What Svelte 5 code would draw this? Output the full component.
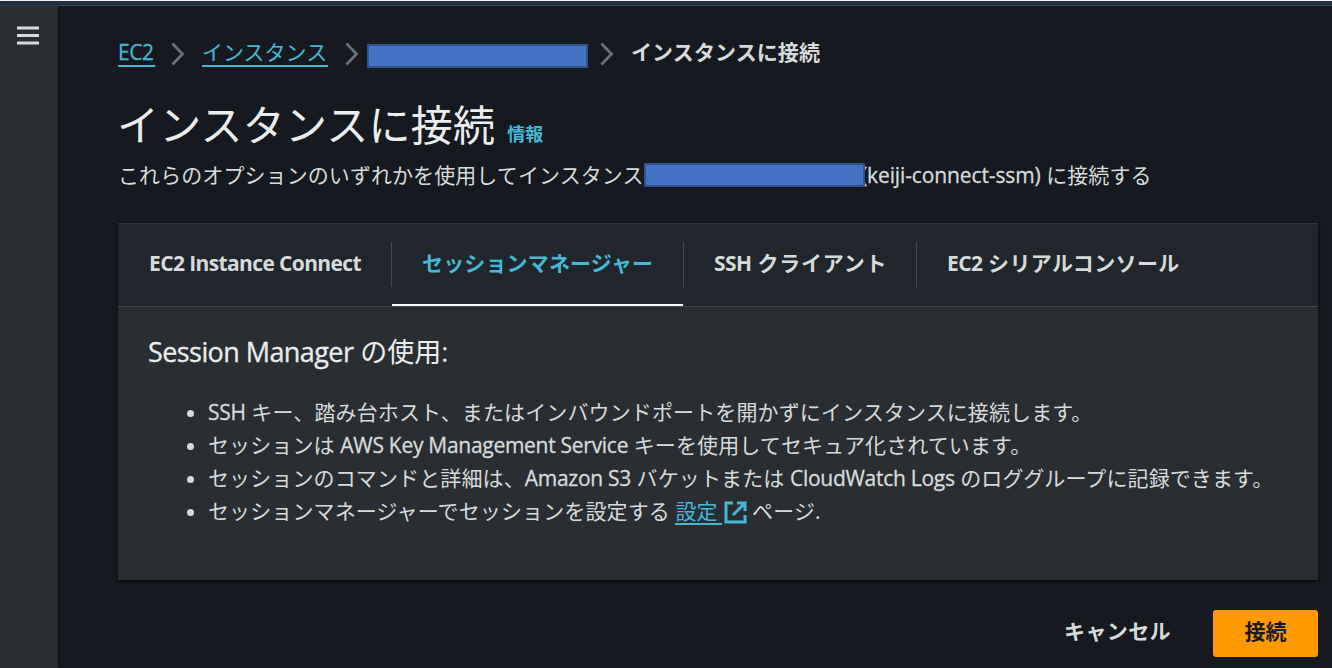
<script>
  const tabs = [
    { id: "eic", latin: "EC2 Instance Connect", label: "" },
    { id: "ssm", latin: "", label: "セッションマネージャー" },
    { id: "ssh", latin: "SSH", label: " クライアント" },
    { id: "serial", latin: "EC2", label: " シリアルコンソール" },
  ];

  let active = "ssm";
</script>

<div class="topbar"></div>
<div class="layout">
  <aside>
    <button class="menu" aria-label="menu">
      <svg width="22" height="19" viewBox="0 0 22 19">
        <path d="M0 2h22M0 9.5h22M0 17h22" stroke="#d5dbdb" stroke-width="3" />
      </svg>
    </button>
  </aside>

  <main>
    <nav class="breadcrumb">
      <a href="#ec2" class="ec2">EC2</a>
      <svg class="chevron" width="14" height="24" viewBox="0 0 14 24"><path d="M1.5 1.5l10 10.5-10 10.5" /></svg>
      <a href="#instances" class="instances">インスタンス</a>
      <svg class="chevron" width="14" height="24" viewBox="0 0 14 24"><path d="M1.5 1.5l10 10.5-10 10.5" /></svg>
      <span class="mask"></span>
      <svg class="chevron" width="14" height="24" viewBox="0 0 14 24"><path d="M1.5 1.5l10 10.5-10 10.5" /></svg>
      <b>インスタンスに接続</b>
    </nav>

    <header>
      <h1>インスタンスに接続</h1>
      <a href="#info" class="info">情報</a>
    </header>
    <p class="description">
      <span>これらのオプションのいずれかを使用してインスタンス</span><span class="mask"></span><span class="target"><span class="latin name">(keiji-connect-ssm)</span> に接続する</span>
    </p>

    <section>
      <div class="tabs">
        {#each tabs as tab}
          <button class="tab {tab.id}" class:active={tab.id == active} on:click={() => (active = tab.id)}>
            <span class="latin">{tab.latin}</span>{tab.label}
          </button>
        {/each}
      </div>
      <div class="panel">
        <h2><span class="latin">Session Manager</span> の使用:</h2>
        <ul>
          <li><span class="latin">SSH</span> キー、踏み台ホスト、またはインバウンドポートを開かずにインスタンスに接続します。</li>
          <li>セッションは <span class="latin">AWS Key Management Service</span> キーを使用してセキュア化されています。</li>
          <li>セッションのコマンドと詳細は、<span class="latin">Amazon S3</span> バケットまたは <span class="latin">CloudWatch Logs</span> のロググループに記録できます。</li>
          <li>
            セッションマネージャーでセッションを設定する <a href="#settings" class="settings">設定</a><svg class="external" width="23" height="23" viewBox="0 0 23 23">
              <path d="M9 2H2v19h19v-7M13 2h8v8M20.5 2.5L9 14" />
            </svg> ページ.
          </li>
        </ul>
      </div>
    </section>

    <footer>
      <button class="cancel">キャンセル</button>
      <button class="primary">接続</button>
    </footer>
  </main>
</div>

<style>
  :global(body) {
    background: #16191f;
    overflow: hidden;
  }

  .topbar {
    height: 6px;
    box-sizing: border-box;
    background: #232f3e;
    border-top: 1px solid #f2f3f3;
    border-bottom: 1px solid #414d5c;
  }

  .layout {
    display: flex;
    height: 662px;
    font-family: "Open Sans", "Noto Sans CJK JP", sans-serif;
    font-size: 21px;
    line-height: 33px;
    color: #d5dbdb;
  }

  aside {
    width: 58px;
    flex: none;
    background: #2a2e33;
    box-shadow: 1px 0 2px #0c0e11;
  }

  button {
    font: inherit;
    color: inherit;
    background: none;
    border: 0;
    padding: 0;
    white-space: nowrap;
  }

  .menu {
    display: block;
    margin: 20px 0 0 17px;
    line-height: 0;
  }

  main {
    flex: 1;
    padding: 29px 14px 0 60px;
    min-width: 0;
  }

  a {
    color: #44b9d6;
    text-decoration: none;
  }

  .breadcrumb {
    display: flex;
    align-items: center;
    height: 36px;
  }

  .breadcrumb b {
    padding-bottom: 2px;
    letter-spacing: 0.1px;
  }

  .breadcrumb a {
    line-height: 25px;
    height: 27px;
    box-sizing: border-box;
    border-bottom: 2px solid #44b9d6;
    margin-top: 1px;
  }

  .breadcrumb .ec2 {
    width: 37px;
    letter-spacing: -0.4px;
    -webkit-text-stroke: 0.3px;
  }

  .instances {
    width: 126px;
    margin-left: -1px;
  }

  .chevron {
    margin: 2px 18px 0 16px;
    fill: none;
    stroke: #687078;
    stroke-width: 2.8;
  }

  .instances + .chevron {
    margin-left: 17px;
    margin-right: 8px;
  }

  .mask + .chevron {
    margin-left: 12px;
    margin-right: 17px;
  }

  .mask {
    display: inline-block;
    width: 221px;
    height: 24px;
    flex: none;
    box-sizing: border-box;
    background: #4472c4;
    border: 2px solid #2f528f;
  }

  .breadcrumb .mask {
    margin-top: 5px;
  }

  header {
    display: flex;
    align-items: baseline;
    height: 60px;
    margin-top: 24px;
  }

  h1 {
    margin: 0 0 0 -1px;
    font-size: 42px;
    line-height: 60px;
    font-weight: 400;
    letter-spacing: 0.2px;
    color: #eaeded;
  }

  .info {
    margin-left: 12px;
    font-size: 18px;
    font-weight: 700;
    letter-spacing: 0.2px;
  }

  .description {
    display: flex;
    align-items: center;
    height: 33px;
    margin: 3px 0 0;
    white-space: nowrap;
    letter-spacing: 0.08px;
  }

  .description > span:first-child {
    width: 526px;
    padding-top: 1px;
  }

  .description .mask {
    position: relative;
  }

  .target {
    margin-left: -4px;
    padding-top: 1px;
    letter-spacing: 0.1px;
  }

  .latin {
    letter-spacing: -0.28px;
    -webkit-text-stroke: 0.3px;
  }

  .name {
    letter-spacing: -0.12px;
  }

  section {
    margin-top: 32px;
    height: 357px;
    background: #2a2e33;
    box-shadow: 0 1px 2px #0a0c0f, 1px 1px 2px #0e1014;
  }

  .tabs {
    display: flex;
    height: 84px;
    box-sizing: border-box;
    background: #21252c;
    border-top: 1px solid #30353a;
    border-bottom: 1px solid #414750;
  }

  .tab {
    position: relative;
    font-weight: 700;
    height: 82px;
    padding: 0 0 4px 30px;
    box-sizing: border-box;
    text-align: left;
    letter-spacing: 0.15px;
  }

  .tab .latin {
    letter-spacing: -0.62px;
    -webkit-text-stroke: 0;
  }

  .tab + .tab::before {
    content: "";
    position: absolute;
    left: -1px;
    top: 18px;
    width: 1px;
    height: 45px;
    background: #414750;
  }

  .eic {
    width: 274px;
    padding-left: 31px;
  }

  .ssm {
    width: 292px;
  }

  .ssh {
    width: 233px;
    letter-spacing: 0.75px;
  }

  .serial {
    width: 262px;
    letter-spacing: 0.35px;
  }

  .active {
    color: #44b9d6;
  }

  .active::after {
    content: "";
    position: absolute;
    left: 0;
    right: 1px;
    bottom: 0;
    height: 2px;
    background: #fff;
  }

  .panel {
    padding: 28px 30px 0;
  }

  h2 {
    margin: 0;
    font-size: 27px;
    line-height: 34px;
    font-weight: 400;
    color: #eaeded;
  }

  h2 .latin {
    letter-spacing: -0.58px;
  }

  ul {
    margin: 27px 0 0;
    padding: 0 0 0 60px;
    white-space: nowrap;
    letter-spacing: 0.12px;
  }

  li {
    height: 33px;
  }

  .settings {
    display: inline-block;
    width: 47px;
    height: 27px;
    line-height: 26px;
    box-sizing: border-box;
    border-bottom: 2px solid #44b9d6;
  }

  .external {
    margin-left: 2px;
    margin-right: -1px;
    vertical-align: -5px;
    fill: none;
    stroke: #44b9d6;
    stroke-width: 3;
  }

  footer {
    display: flex;
    justify-content: flex-end;
    align-items: center;
    margin-top: 30px;
    font-weight: 700;
  }

  .cancel {
    margin-right: 42px;
    padding-bottom: 4px;
    letter-spacing: 0.4px;
  }

  .primary {
    width: 105px;
    height: 47px;
    padding-bottom: 4px;
    border-radius: 3px;
    background: #ff9900;
    color: #16191f;
  }
</style>
